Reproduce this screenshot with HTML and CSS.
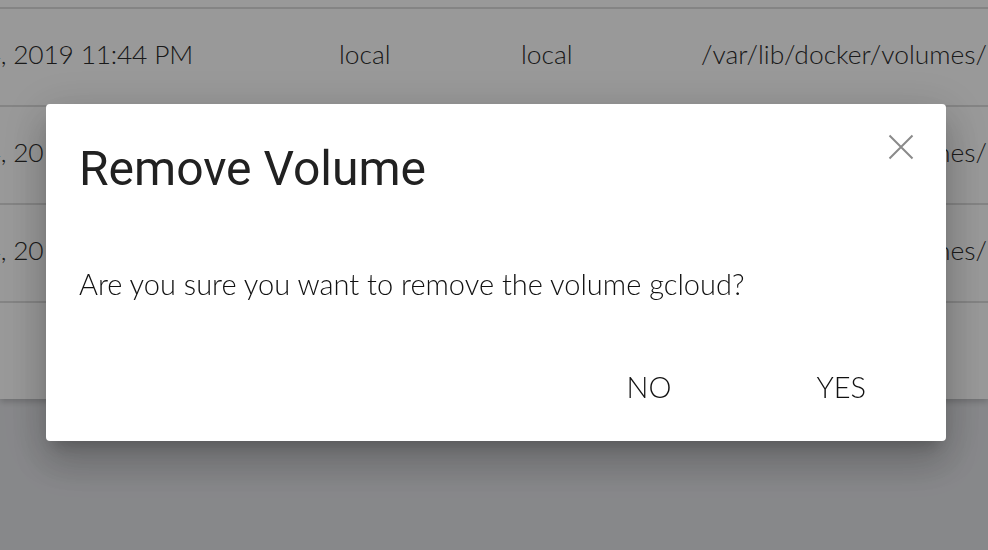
FILE: index.html
```html
<!DOCTYPE html>
<html>
<head>
<meta charset="utf-8">
<link rel="stylesheet" href="styles.css">
</head>
<body>
<div class="page">
  <div class="table">
    <div class="row head"></div>
    <div class="row">
      <div class="cell date"><span>Oct 24, 2019 11:44 PM</span></div>
      <div class="cell c2">local</div>
      <div class="cell c3">local</div>
      <div class="cell path">/var/lib/docker/volumes/</div>
    </div>
    <div class="row">
      <div class="cell date"><span>Oct 24, 2019 11:44 PM</span></div>
      <div class="cell c2">local</div>
      <div class="cell c3">local</div>
      <div class="cell path">/var/lib/docker/volumes/</div>
    </div>
    <div class="row">
      <div class="cell date"><span>Oct 24, 2019 11:44 PM</span></div>
      <div class="cell c2">local</div>
      <div class="cell c3">local</div>
      <div class="cell path">/var/lib/docker/volumes/</div>
    </div>
    <div class="row foot"></div>
  </div>
</div>
<div class="backdrop">
  <div class="dialog">
    <div class="dialog-head">
      <h2 class="title">Remove Volume</h2>
      <button class="close" aria-label="close">
        <svg width="26" height="26" viewBox="0 0 26 26"><path d="M1.5 1.5 L24.5 24.5 M24.5 1.5 L1.5 24.5" stroke="#8a8a8a" stroke-width="2" fill="none"/></svg>
      </button>
    </div>
    <p class="message">Are you sure you want to remove the volume gcloud?</p>
    <div class="actions">
      <button class="btn">NO</button>
      <button class="btn">YES</button>
    </div>
  </div>
</div>
</body>
</html>
```
FILE: styles.css
```css
html, body {
  margin: 0;
  padding: 0;
  height: 100%;
  overflow: hidden;
}
body {
  background: #e2e3e7;
  font-family: Lato, "Liberation Sans", sans-serif;
}
.page {
  height: 100%;
}
.table {
  background: #fff;
  box-shadow: 0 3px 6px rgba(0,0,0,0.18);
}
.row {
  display: flex;
  align-items: center;
  box-sizing: border-box;
  height: 98px;
  padding-bottom: 6px;
  border-bottom: 2px solid #dcdcdc;
  font-size: 26.4px;
  font-weight: 300;
  color: #2c2c2c;
  white-space: nowrap;
  overflow: hidden;
}
.row.head {
  height: 9px;
  padding: 0;
}
.row.foot {
  height: 96px;
  border-bottom: none;
}
.cell.date {
  margin-left: -12px;
  width: 205px;
  flex: none;
  display: flex;
  justify-content: flex-end;
  overflow: hidden;
}
.cell.date span {
  letter-spacing: -0.2px;
}
.cell.c2 {
  margin-left: 146px;
  width: 182px;
  flex: none;
}
.cell.c3 {
  width: 180px;
  flex: none;
}
.cell.path {
  flex: none;
}
.backdrop {
  position: fixed;
  inset: 0;
  background: rgba(0,0,0,0.4);
  display: flex;
  align-items: center;
  justify-content: center;
  padding-left: 4px;
  padding-bottom: 5px;
  box-sizing: border-box;
}
.dialog {
  width: 900px;
  height: 337px;
  background: #fff;
  border-radius: 4px;
  box-shadow: 0 11px 15px -7px rgba(0,0,0,0.2), 0 24px 38px 3px rgba(0,0,0,0.14), 0 9px 46px 8px rgba(0,0,0,0.12);
  box-sizing: border-box;
  padding: 0 33px;
  display: flex;
  flex-direction: column;
}
.dialog-head {
  display: flex;
  justify-content: space-between;
  align-items: flex-start;
}
.title {
  margin: 37px 0 0 0;
  font-family: Roboto, "Noto Sans", sans-serif;
  font-weight: 400;
  font-size: 48px;
  line-height: 56px;
  color: #212121;
  letter-spacing: 0;
}
.close {
  margin: 30px -1px 0 0;
  padding: 0;
  border: none;
  background: none;
  width: 26px;
  height: 26px;
  cursor: pointer;
}
.close svg { display: block; }
.message {
  margin: 69px 0 0 0;
  font-size: 29px;
  line-height: 36px;
  color: #111;
  font-weight: 300;
}
.actions {
  display: flex;
  justify-content: flex-end;
  margin-top: 68px;
  margin-right: 47px;
}
.btn {
  border: none;
  background: none;
  font-family: Lato, "Liberation Sans", sans-serif;
  font-size: 29px;
  font-weight: 300;
  color: #111;
  padding: 0;
  cursor: pointer;
  line-height: 34px;
}
.btn + .btn {
  margin-left: 145px;
}
```
